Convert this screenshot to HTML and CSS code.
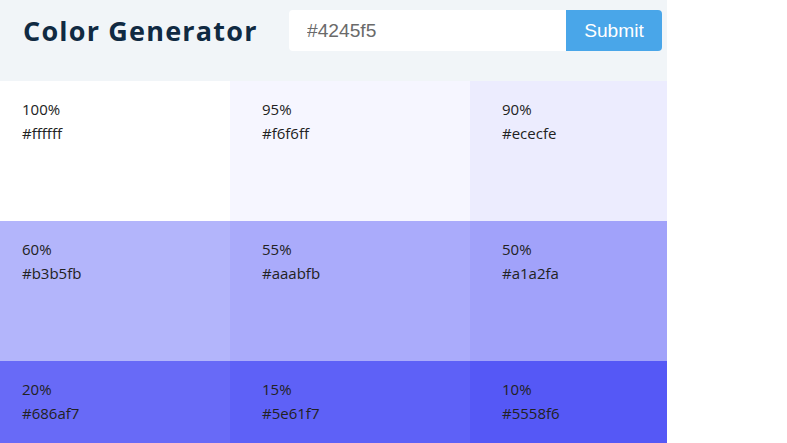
FILE: index.html
```html
<!DOCTYPE html>
<html lang="en">
<head>
<meta charset="utf-8">
<title>Color Generator</title>
<link rel="stylesheet" href="styles.css">
</head>
<body>
<main class="page">
  <header class="header">
    <h1 class="title">Color Generator</h1>
    <form class="form">
      <input class="input" type="text" value="#4245f5">
      <button class="btn" type="button">Submit</button>
    </form>
  </header>
  <section class="colors">
    <article class="color c100"><p class="pct">100%</p><p class="hex">#ffffff</p></article>
    <article class="color c95"><p class="pct">95%</p><p class="hex">#f6f6ff</p></article>
    <article class="color c90"><p class="pct">90%</p><p class="hex">#ececfe</p></article>
    <article class="color c60"><p class="pct">60%</p><p class="hex">#b3b5fb</p></article>
    <article class="color c55"><p class="pct">55%</p><p class="hex">#aaabfb</p></article>
    <article class="color c50"><p class="pct">50%</p><p class="hex">#a1a2fa</p></article>
    <article class="color c20"><p class="pct">20%</p><p class="hex">#686af7</p></article>
    <article class="color c15"><p class="pct">15%</p><p class="hex">#5e61f7</p></article>
    <article class="color c10"><p class="pct">10%</p><p class="hex">#5558f6</p></article>
  </section>
</main>
</body>
</html>
```
FILE: styles.css
```css
* { box-sizing: border-box; }
html, body { margin: 0; padding: 0; background: #fff; }
body { font-family: "Open Sans", "Noto Sans", sans-serif; }
.page { width: 667px; overflow: hidden; }
.header {
  height: 81px;
  background: #f1f5f8;
  display: grid;
  grid-template-columns: 266px 373px;
  align-items: start;
  padding: 10px 0 0 23px;
}
.title {
  margin: 0;
  font-size: 27px;
  line-height: 41px;
  font-weight: 700;
  letter-spacing: 1.2px;
  color: #102a42;
  white-space: nowrap;
}
.form { display: flex; height: 41px; }
.input {
  width: 277px;
  height: 41px;
  border: none;
  border-radius: 4px 0 0 4px;
  background: #fff;
  padding: 0 18px;
  font-family: "Liberation Sans", Arial, sans-serif;
  font-size: 19.2px;
  color: #6a6a6a;
  outline: none;
}
.btn {
  width: 96px;
  height: 41px;
  border: none;
  border-radius: 0 4px 4px 0;
  background: #49a6e9;
  color: #fff;
  font-family: "Liberation Sans", Arial, sans-serif;
  font-size: 19.2px;
  padding: 0;
}
.colors {
  display: grid;
  grid-template-columns: repeat(3, 240px);
  grid-auto-rows: 140px;
  margin-left: -10px;
}
.color { padding: 16px 32px; color: #222; }
.color p { margin: 0; font-size: 15px; line-height: 24px; }
.c100 { background: #ffffff; }
.c95 { background: #f6f6ff; }
.c90 { background: #ececfe; }
.c60 { background: #b3b5fb; }
.c55 { background: #aaabfb; }
.c50 { background: #a1a2fa; }
.c20 { background: #686af7; }
.c15 { background: #5e61f7; }
.c10 { background: #5558f6; }
```
